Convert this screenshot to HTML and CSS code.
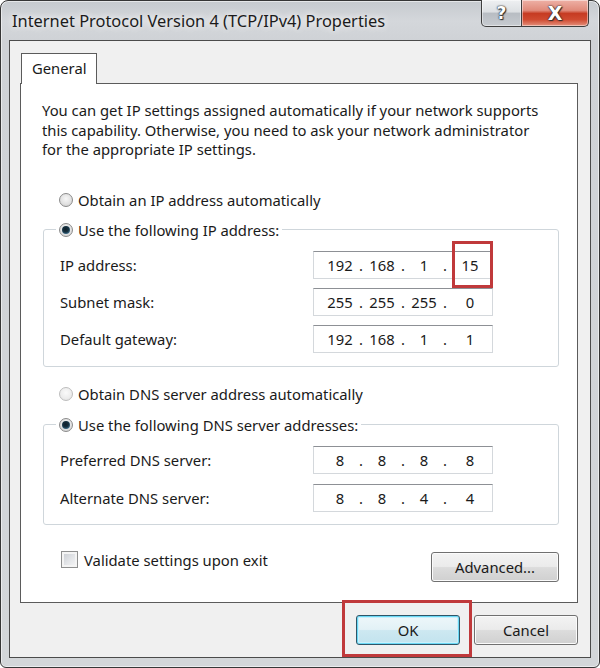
FILE: index.html
```html
<!DOCTYPE html>
<html>
<head>
<meta charset="utf-8">
<title>Internet Protocol Version 4 (TCP/IPv4) Properties</title>
<link rel="stylesheet" href="styles.css">
</head>
<body>
<div class="window">
  <div class="titlebar">
    <span class="title">Internet Protocol Version 4 (TCP/IPv4) Properties</span>
    <div class="caption">
      <div class="cap-btn help">?</div>
      <div class="cap-btn close">X</div>
    </div>
  </div>
  <div class="client">
    <div class="tabstrip"><div class="tab">General</div></div>
    <div class="tabpage">
      <p class="desc">You can get IP settings assigned automatically if your network supports<br>this capability. Otherwise, you need to ask your network administrator<br>for the appropriate IP settings.</p>

      <div class="opt first"><span class="radio"></span><span>Obtain an IP address automatically</span></div>

      <fieldset class="group group-ip">
        <legend><span class="radio checked"></span><span>Use the following IP address:</span></legend>
        <div class="rows rows-ip">
          <span class="lbl">IP address:</span>
          <div class="ipfield"><span>192</span><i>.</i><span>168</span><i>.</i><span>1</span><i>.</i><span>15</span><div class="mark mark-ip"></div></div>
          <span class="lbl">Subnet mask:</span>
          <div class="ipfield"><span>255</span><i>.</i><span>255</span><i>.</i><span>255</span><i>.</i><span>0</span></div>
          <span class="lbl">Default gateway:</span>
          <div class="ipfield"><span>192</span><i>.</i><span>168</span><i>.</i><span>1</span><i>.</i><span>1</span></div>
        </div>
      </fieldset>

      <div class="opt dns-auto"><span class="radio disabled"></span><span>Obtain DNS server address automatically</span></div>

      <fieldset class="group group-dns">
        <legend><span class="radio checked"></span><span>Use the following DNS server addresses:</span></legend>
        <div class="rows rows-dns">
          <span class="lbl">Preferred DNS server:</span>
          <div class="ipfield"><span>8</span><i>.</i><span>8</span><i>.</i><span>8</span><i>.</i><span>8</span></div>
          <span class="lbl">Alternate DNS server:</span>
          <div class="ipfield"><span>8</span><i>.</i><span>8</span><i>.</i><span>4</span><i>.</i><span>4</span></div>
        </div>
      </fieldset>

      <div class="bottom-row">
        <div class="check-row"><span class="checkbox"></span><span>Validate settings upon exit</span></div>
        <div class="btn adv">Advanced...</div>
      </div>
    </div>
    <div class="dialog-buttons">
      <div class="btn ok">OK<div class="mark mark-ok"></div></div>
      <div class="btn">Cancel</div>
    </div>
  </div>
</div>
</body>
</html>
```
FILE: styles.css
```css
* { box-sizing: border-box; }
html, body { margin: 0; padding: 0; }
body {
  width: 600px;
  height: 668px;
  overflow: hidden;
  background: #ffffff;
  font-family: "Noto Sans", "Open Sans", sans-serif;
  font-size: 14.8px;
  color: #1a1a1a;
}

.window {
  width: 600px;
  height: 668px;
  border: 1px solid #363636;
  border-radius: 8px 8px 6px 6px;
  background: linear-gradient(180deg, #c6cacf 0px, #d4d7db 20px, #cfd2d6 40px, #d3d6d9 100%);
  box-shadow: inset 0 0 0 1px rgba(255,255,255,0.55);
  display: flex;
  flex-direction: column;
}

.titlebar {
  height: 39px;
  display: flex;
  align-items: flex-start;
  padding-left: 11px;
}
.title {
  margin-top: 9px;
  font-size: 16.4px;
  line-height: 22px;
  color: #1b1b1b;
  text-shadow: 0 0 6px rgba(255,255,255,0.9), 0 0 10px rgba(255,255,255,0.7);
  white-space: nowrap;
}
.caption {
  margin-left: auto;
  margin-right: 10px;
  margin-top: -1px;
  display: flex;
}
.cap-btn {
  height: 27px;
  border: 1px solid #3f3f3f;
  border-top: none;
  display: flex;
  align-items: center;
  justify-content: center;
  font-family: "DejaVu Sans", sans-serif;
  font-weight: bold;
  font-size: 17px;
  color: #ffffff;
  text-shadow: 0 0 1px #222, 0 0 2px #222, 1px 1px 1px #333;
  box-shadow: inset 0 0 0 1px rgba(255,255,255,0.45);
}
.help {
  width: 41px;
  border-radius: 0 0 0 5px;
  background: linear-gradient(180deg, #eef0f2 0%, #dde0e3 45%, #b8bdc3 52%, #c7cbd0 100%);
}
.close {
  width: 67px;
  border-left: none;
  border-radius: 0 0 5px 0;
  font-size: 19px;
  background: linear-gradient(180deg, #eeb1a6 0%, #e08a7a 40%, #c63b22 52%, #cf4a30 75%, #e4907c 100%);
}

.client {
  flex: 1;
  margin: 0 8px 9px 8px;
  border: 1px solid #4b4b4b;
  background: #f0f0f0;
  padding: 12px 12px 0 10px;
  display: flex;
  flex-direction: column;
}

.tabstrip { display: flex; padding-left: 1px; }
.tab {
  position: relative;
  z-index: 1;
  width: 76px;
  height: 31px;
  margin-bottom: -1px;
  border: 1px solid #5b5b5b;
  border-bottom: none;
  background: #ffffff;
  padding: 4px 0 0 10px;
  line-height: 20px;
}

.tabpage {
  height: 520px;
  border: 1px solid #5b5b5b;
  background: #ffffff;
  display: flex;
  flex-direction: column;
}

.desc {
  margin: 17px 0 0 21px;
  line-height: 19.5px;
  white-space: nowrap;
}

.opt {
  display: flex;
  align-items: center;
  gap: 5px;
  height: 20px;
  padding-left: 38px;
  white-space: nowrap;
}
.opt.first { margin-top: 30px; }
.opt.dns-auto { margin-top: 17px; }

.radio {
  position: relative;
  flex: none;
  width: 14px;
  height: 14px;
  border-radius: 50%;
  border: 1px solid #8b8b8b;
  background: radial-gradient(circle at 50% 40%, #f7f7f7 0%, #e2e2e2 55%, #c9c9c9 100%);
}
.radio.disabled {
  border-color: #bdbdbd;
  background: radial-gradient(circle at 50% 40%, #fafafa 0%, #ececec 60%, #dcdcdc 100%);
}
.radio.checked::after {
  content: "";
  position: absolute;
  left: 2px;
  top: 2px;
  width: 8px;
  height: 8px;
  border-radius: 50%;
  background: radial-gradient(circle at 45% 40%, #0f1f2a 0%, #15303f 45%, #3f6f8c 75%, #7aa6bf 100%);
}

.group {
  margin: 0 18px 0 22px;
  padding: 0;
  border: 1px solid #cfd6db;
  border-radius: 3px;
  min-width: 0;
}
.group-ip { margin-top: 10px; }
.group-dns { margin-top: 11px; }
.group legend {
  margin-left: 12px;
  padding: 0 3px;
  height: 20px;
  display: flex;
  align-items: center;
  gap: 5px;
  white-space: nowrap;
}

.rows {
  display: grid;
  grid-template-columns: 253px 180px;
  align-items: center;
  padding-left: 16px;
}
.rows-ip { row-gap: 9px; padding-top: 11px; padding-bottom: 13px; }
.rows-dns { row-gap: 10px; padding-top: 11px; padding-bottom: 12px; }
.lbl { white-space: nowrap; }

.ipfield {
  position: relative;
  height: 28px;
  border: 1px solid #d4d8dc;
  border-top-color: #8d9095;
  background: #ffffff;
  display: flex;
  align-items: center;
  padding-left: 9px;
}
.ipfield span {
  width: 34px;
  text-align: center;
}
.ipfield span:last-of-type { width: 42px; }
.ipfield i {
  width: 8px;
  text-align: center;
  font-style: normal;
}

.mark {
  position: absolute;
  border: 3px solid #c0393b;
  pointer-events: none;
}
.mark-ip {
  top: -11px;
  bottom: -10px;
  right: -1px;
  width: 41px;
}

.bottom-row {
  margin-top: 26px;
  display: flex;
  align-items: flex-start;
  justify-content: space-between;
  padding-left: 40px;
  padding-right: 18px;
}
.check-row {
  display: flex;
  align-items: center;
  gap: 6px;
  height: 18px;
  white-space: nowrap;
}
.checkbox {
  flex: none;
  width: 17px;
  height: 17px;
  border: 1px solid #8e8f8f;
  background: linear-gradient(135deg, #c6cad0 0%, #e4e6e9 55%, #f7f7f7 100%);
  box-shadow: inset 0 0 0 2px #f4f4f4;
}

.btn {
  position: relative;
  height: 30px;
  border: 1px solid #707070;
  border-radius: 3px;
  background: linear-gradient(180deg, #f3f3f3 0%, #ebebeb 48%, #dcdcdc 52%, #d0d0d0 100%);
  box-shadow: inset 0 0 0 1px #fbfbfb;
  display: flex;
  align-items: center;
  justify-content: center;
  white-space: nowrap;
}
.adv { width: 128px; margin-top: 1px; }

.dialog-buttons {
  margin-top: 12px;
  display: flex;
  justify-content: flex-end;
  gap: 14px;
}
.dialog-buttons .btn { width: 104px; }
.btn.ok {
  border-color: #2f5567;
  background: linear-gradient(180deg, #eef7fa 0%, #e2f1f6 48%, #cde8f1 52%, #c2e3ee 100%);
  box-shadow: inset 0 0 0 1px #6ad8f5, inset 0 0 0 2px #c9f0fb;
}
.mark-ok {
  top: -16px;
  left: -15px;
  right: -13px;
  bottom: -13px;
}
```
